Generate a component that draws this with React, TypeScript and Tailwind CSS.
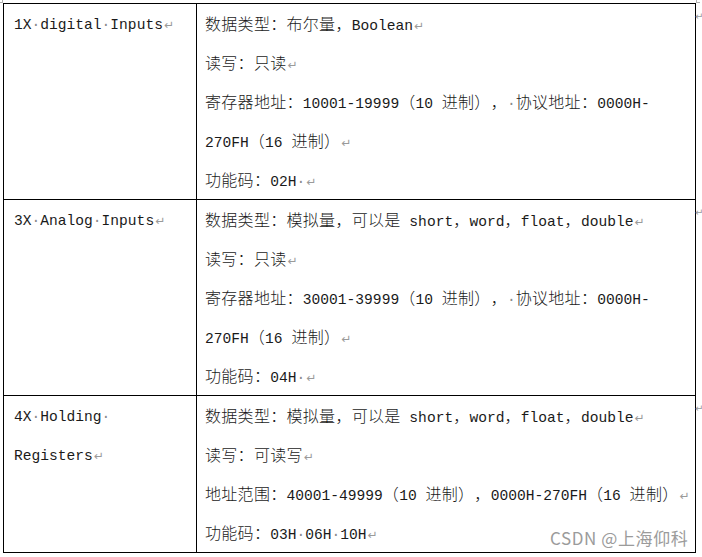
import type { ReactNode } from "react";

type Row = {
  left: string[];
  right: string[];
};

const rows: Row[] = [
  {
    left: ["1X·digital·Inputs↵"],
    right: [
      "数据类型：布尔量，Boolean↵",
      "读写：只读↵",
      "寄存器地址：10001-19999（10 进制），·协议地址：0000H-",
      "270FH（16 进制）↵",
      "功能码：02H·↵",
    ],
  },
  {
    left: ["3X·Analog·Inputs↵"],
    right: [
      "数据类型：模拟量，可以是 short，word，float，double↵",
      "读写：只读↵",
      "寄存器地址：30001-39999（10 进制），·协议地址：0000H-",
      "270FH（16 进制）↵",
      "功能码：04H·↵",
    ],
  },
  {
    left: ["4X·Holding·", "Registers↵"],
    right: [
      "数据类型：模拟量，可以是 short，word，float，double↵",
      "读写：可读写↵",
      "地址范围：40001-49999（10 进制），0000H-270FH（16 进制）↵",
      "功能码：03H·06H·10H↵",
    ],
  },
];

type Kind = "cjk" | "latin" | "dot" | "ret";

function kindOf(ch: string): Kind {
  if (ch === "·") return "dot";
  if (ch === "↵") return "ret";
  return ch.charCodeAt(0) > 0x2000 ? "cjk" : "latin";
}

// split a Word-style line into runs: CJK, latin (half width), space marks, paragraph marks
function Line({ text }: { text: string }) {
  const parts: { kind: Kind; text: string }[] = [];
  for (const ch of text) {
    const k = kindOf(ch);
    const last = parts[parts.length - 1];
    if (last && last.kind === k) last.text += ch;
    else parts.push({ kind: k, text: ch });
  }

  const out: ReactNode[] = parts.map((p, i) => {
    if (p.kind === "cjk")
      return (
        <span
          key={i}
          className="font-['Noto_Sans_CJK_SC',sans-serif] text-[16px] font-light tracking-[0.3px] [text-spacing-trim:space-all]"
        >
          {p.text}
        </span>
      );
    if (p.kind === "latin")
      return (
        <span key={i} className="font-['Liberation_Mono',monospace] text-[14.6px]">
          {p.text}
        </span>
      );
    if (p.kind === "dot")
      return (
        <span key={i} className="font-['Liberation_Mono',monospace] text-[14.6px] text-[#8a8a8a]">
          {p.text}
        </span>
      );
    return (
      <span key={i} className="font-['DejaVu_Sans',sans-serif] text-[12px] text-[#9a9a9a] pl-[1px]">
        {p.text}
      </span>
    );
  });

  return <div className="h-[39px] leading-[39px] whitespace-pre">{out}</div>;
}

export default function App() {
  return (
    <div className="relative w-[702px] h-[557px] bg-white overflow-hidden text-[#1a1a1a]">
      {/* page corner marks */}
      <div className="absolute left-0 top-0 w-[3px] h-[3px] border-r border-b border-[#b0b0b0]" />
      <div className="absolute left-[696px] top-0 w-[4px] h-[3px] border-l border-b border-[#b0b0b0]" />

      <div className="pt-[3px] pl-[3px]">
        <div className="w-[693px] border border-black">
          {rows.map((row, i) => (
            <div
              key={i}
              className={`relative flex ${i < rows.length - 1 ? "border-b border-black" : ""}`}
            >
              <div className="w-[193px] shrink-0 border-r border-black pl-[10px]">
                {row.left.map((t, j) => (
                  <Line key={j} text={t} />
                ))}
              </div>
              <div className="flex-1 pl-[8px]">
                {row.right.map((t, j) => (
                  <Line key={j} text={t} />
                ))}
              </div>
              <span className="absolute left-[691px] top-[5px] font-['DejaVu_Sans',sans-serif] text-[10px] text-[#9a9a9a]">
                ↵
              </span>
            </div>
          ))}
        </div>
      </div>

      {/* CSDN watermark */}
      <div className="absolute left-[550px] top-[527px] font-['Noto_Sans_CJK_SC',sans-serif] text-[17px] leading-[22px] text-[#9b9b9b] tracking-[0.6px]">
        CSDN @上海仰科
      </div>
    </div>
  );
}
